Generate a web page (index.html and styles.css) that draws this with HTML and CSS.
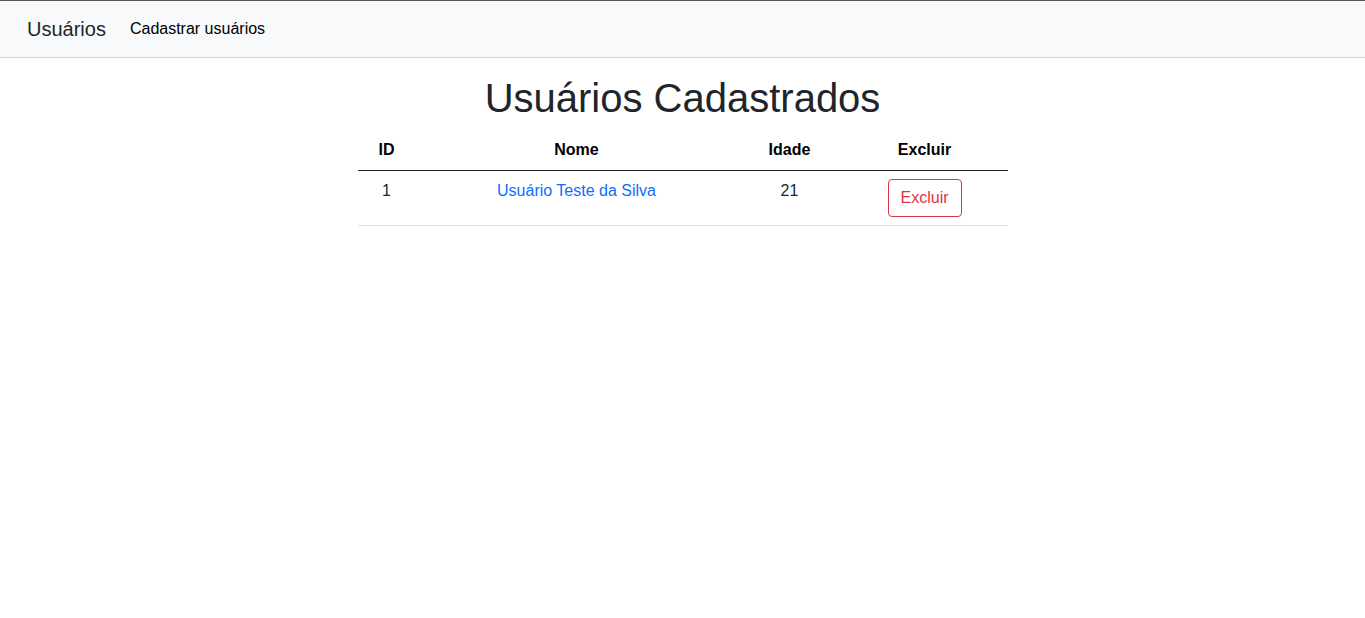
FILE: index.html
```html
<!DOCTYPE html>
<html lang="pt-BR">
<head>
<meta charset="utf-8">
<title>Usuários</title>
<link rel="stylesheet" href="styles.css">
</head>
<body>
<nav class="navbar">
  <a class="brand" href="#">Usuários</a>
  <a class="nav-link" href="#">Cadastrar usuários</a>
</nav>
<main class="content">
  <h1 class="title">Usuários Cadastrados</h1>
  <table class="users">
    <thead>
      <tr>
        <th class="c-id">ID</th>
        <th class="c-nome">Nome</th>
        <th class="c-idade">Idade</th>
        <th class="c-del">Excluir</th>
      </tr>
    </thead>
    <tbody>
      <tr>
        <td>1</td>
        <td><a class="name-link" href="#">Usuário Teste da Silva</a></td>
        <td>21</td>
        <td><button class="btn-del" type="button">Excluir</button></td>
      </tr>
    </tbody>
  </table>
</main>
</body>
</html>
```
FILE: styles.css
```css
* { box-sizing: border-box; }
html, body {
  margin: 0;
  padding: 0;
  background: #fff;
  color: #212529;
  font-family: "Liberation Sans", Arial, sans-serif;
  font-size: 16px;
  line-height: 1.5;
}
.navbar {
  display: flex;
  align-items: center;
  height: 58px;
  padding: 0 27px;
  background: #f8f9fa;
  border-top: 1px solid #555;
  border-bottom: 1px solid #cfd2d5;
}
.brand {
  font-size: 20px;
  line-height: 30px;
  color: #212529;
  text-decoration: none;
  margin-right: 16px;
}
.nav-link {
  padding: 0 8px;
  color: #000;
  text-decoration: none;
  font-size: 16px;
}
.content {
  display: flex;
  flex-direction: column;
  align-items: center;
}
.title {
  margin: 16px 0 8px;
  font-size: 40px;
  font-weight: 400;
  line-height: 48px;
  color: #212529;
}
.users {
  width: 650px;
  border-collapse: collapse;
}
.users th, .users td {
  padding: 8px;
  text-align: center;
  vertical-align: top;
}
.users th {
  font-weight: 700;
  color: #000;
  border-bottom: 1px solid #212529;
}
.users td {
  border-bottom: 1px solid #dee2e6;
}
.c-id { width: 58px; }
.c-nome { width: 322px; }
.c-idade { width: 104px; }
.c-del { width: 166px; }
.name-link {
  color: #0d6efd;
  text-decoration: none;
}
.btn-del {
  font-family: inherit;
  font-size: 16px;
  line-height: 24px;
  padding: 6px 12px;
  color: #dc3545;
  background: transparent;
  border: 1px solid #dc3545;
  border-radius: 4px;
  width: 74px;
  height: 38px;
}
```
